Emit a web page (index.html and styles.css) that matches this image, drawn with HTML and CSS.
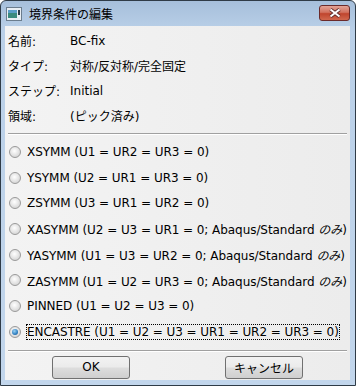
FILE: index.html
```html
<!DOCTYPE html>
<html lang="ja">
<head>
<meta charset="UTF-8">
<title>境界条件の編集</title>
<link rel="stylesheet" href="styles.css">
</head>
<body>
<div class="window">
    <div class="titlebar">
        <svg class="app-icon" width="16" height="14" viewBox="0 0 16 14">
            <rect x="0.5" y="0.5" width="15" height="13" fill="#e8eef4" stroke="#6b7d8e"/>
            <rect x="2" y="3" width="9" height="8" fill="#3a8a7e"/>
            <rect x="2" y="3" width="9" height="3" fill="#5a9ec8"/>
            <rect x="12" y="3" width="2" height="5" fill="#2b3a48"/>
        </svg>
        <span class="title">境界条件の編集</span>
        <div class="close-btn">
            <svg width="14" height="10" viewBox="0 0 14 10">
                <path d="M2.5 1.5 L11.5 8.5 M11.5 1.5 L2.5 8.5" stroke="#5a2a2a" stroke-width="3.6"/>
                <path d="M2.5 1.5 L11.5 8.5 M11.5 1.5 L2.5 8.5" stroke="#fff" stroke-width="2"/>
            </svg>
        </div>
    </div>
    <div class="client">
        <div class="info">
            <div class="row"><span class="label">名前:</span><span>BC-fix</span></div>
            <div class="row"><span class="label">タイプ:</span><span>対称/反対称/完全固定</span></div>
            <div class="row"><span class="label">ステップ:</span><span>Initial</span></div>
            <div class="row"><span class="label">領域:</span><span>(ピック済み)</span></div>
        </div>
        <hr class="sep">
        <div class="options">
            <label class="opt"><span class="radio"></span><span class="txt">XSYMM (U1 = UR2 = UR3 = 0)</span></label>
            <label class="opt"><span class="radio"></span><span class="txt">YSYMM (U2 = UR1 = UR3 = 0)</span></label>
            <label class="opt"><span class="radio"></span><span class="txt">ZSYMM (U3 = UR1 = UR2 = 0)</span></label>
            <label class="opt"><span class="radio"></span><span class="txt">XASYMM (U2 = U3 = UR1 = 0; Abaqus/Standard <i>のみ</i>)</span></label>
            <label class="opt"><span class="radio"></span><span class="txt">YASYMM (U1 = U3 = UR2 = 0; Abaqus/Standard <i>のみ</i>)</span></label>
            <label class="opt"><span class="radio"></span><span class="txt">ZASYMM (U1 = U2 = UR3 = 0; Abaqus/Standard <i>のみ</i>)</span></label>
            <label class="opt"><span class="radio"></span><span class="txt">PINNED (U1 = U2 = U3 = 0)</span></label>
            <label class="opt"><span class="radio checked"></span><span class="txt focus">ENCASTRE (U1 = U2 = U3 = UR1 = UR2 = UR3 = 0)</span></label>
        </div>
        <hr class="sep">
        <div class="buttons">
            <button class="btn">OK</button>
            <button class="btn">キャンセル</button>
        </div>
    </div>
</div>
</body>
</html>
```

FILE: styles.css
```css
body {
    margin: 0;
    width: 356px;
    height: 386px;
    overflow: hidden;
    font-family: "DejaVu Sans", "Noto Sans CJK JP", sans-serif;
    font-size: 12px;
    color: #000;
}

.window {
    box-sizing: border-box;
    width: 356px;
    height: 386px;
    border: 1px solid #2f3b47;
    border-radius: 6px 6px 0 0;
    background: linear-gradient(to bottom, #a6bfdb 0px, #bad0e8 30px, #c2d6ec 100%);
    padding: 0 5px 5px 4px;
    display: flex;
    flex-direction: column;
}

.titlebar {
    height: 25px;
    flex-shrink: 0;
    display: flex;
    align-items: center;
    padding-left: 1px;
}

.app-icon {
    margin-right: 7px;
}

.title {
    font-family: "Noto Sans CJK JP", sans-serif;
    font-size: 12px;
    color: #000;
    flex: 1;
}

.close-btn {
    width: 31px;
    height: 16px;
    align-self: flex-start;
    margin-top: 4px;
    box-sizing: border-box;
    border: 1px solid #6b2a2a;
    border-radius: 3px;
    background: linear-gradient(to bottom, #e3a295 0%, #d2725f 45%, #c0452e 55%, #d0684e 100%);
    display: flex;
    align-items: center;
    justify-content: center;
}

.client {
    flex: 1;
    background: linear-gradient(to right, #f3f3f3, #ececec);
    padding: 0 3px;
    display: flex;
    flex-direction: column;
}

.info {
    padding-top: 2px;
    flex-shrink: 0;
}

.row {
    height: 25px;
    display: flex;
    align-items: center;
}

.label {
    width: 62px;
}

.sep {
    flex-shrink: 0;
    border: none;
    border-top: 1px solid #a0a0a0;
    border-bottom: 1px solid #fff;
    margin: 5px 0 0 0;
}

.options {
    flex-shrink: 0;
    padding: 4px 0 0 1px;
}

.opt {
    height: 25.7px;
    display: flex;
    align-items: center;
}

.radio {
    box-sizing: border-box;
    width: 12px;
    height: 12px;
    border-radius: 50%;
    border: 1px solid #9a9a9a;
    background: radial-gradient(circle at 45% 40%, #ffffff 0%, #e2e2e2 55%, #c9c9c9 100%);
    margin-right: 5px;
    flex-shrink: 0;
    position: relative;
}

.radio.checked::after {
    content: "";
    position: absolute;
    left: 2px;
    top: 2px;
    width: 6px;
    height: 6px;
    border-radius: 50%;
    background: radial-gradient(circle at 40% 35%, #9ad2f5 0%, #2f7fc0 60%, #164c84 100%);
}

.txt {
    padding: 1px;
    white-space: nowrap;
    letter-spacing: -0.06px;
}

.txt i {
    font-family: "Noto Sans CJK JP", sans-serif;
    font-style: italic;
}

.txt.focus {
    border: 1px dotted #000;
    padding: 0;
}

.buttons {
    flex-shrink: 0;
    display: flex;
    gap: 95px;
    padding: 4px 0 0 44px;
}

.btn {
    width: 78px;
    height: 23px;
    border: 1px solid #707070;
    border-radius: 3px;
    background: linear-gradient(to bottom, #f2f2f2 0%, #ebebeb 48%, #dddddd 52%, #cfcfcf 100%);
    font-family: "DejaVu Sans", "Noto Sans CJK JP", sans-serif;
    font-size: 12px;
    color: #000;
    padding: 0;
}
```
